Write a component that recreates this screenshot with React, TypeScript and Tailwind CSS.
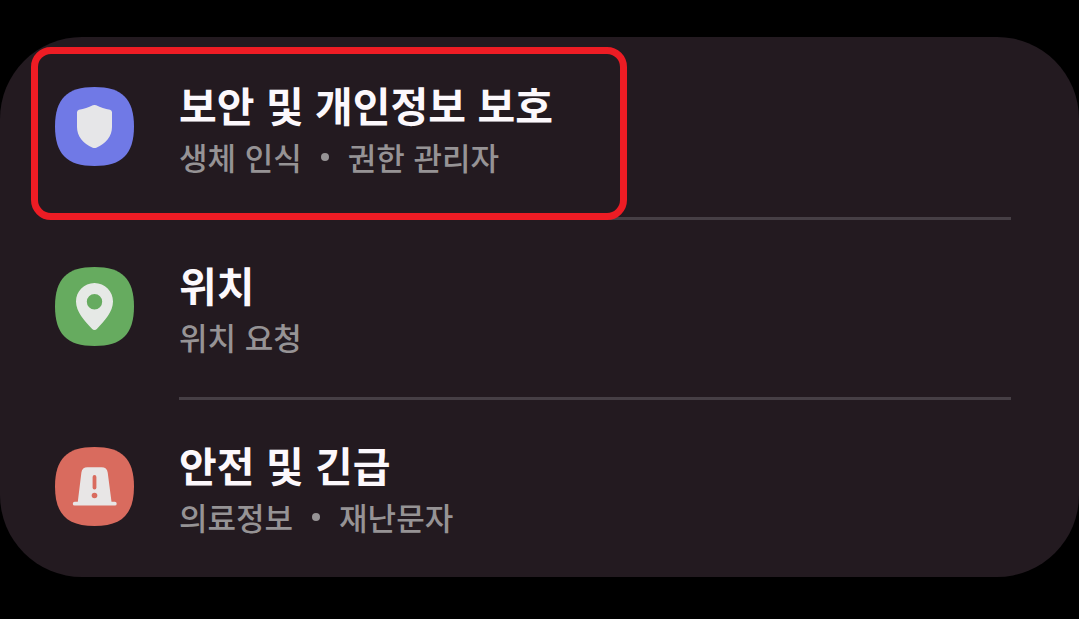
import type { ReactNode } from "react";

type Item = {
  title: string;
  details: string[];
  color: string;
  icon: ReactNode;
};

const items: Item[] = [
  {
    title: "보안 및 개인정보 보호",
    details: ["생체 인식", "권한 관리자"],
    color: "text-[#7079e6]",
    icon: (
      <path
        fill="#e6e6e8"
        d="M37.800 18.300Q39.500 17.700 41.200 18.300C45.500 20.500 50 22 55 22.700Q57 23.200 57 25.300V40C57 49 51 56.500 41.300 60.700Q39.500 61.500 37.700 60.700C28 56.500 22 49 22 40V25.300Q22 23.200 24 22.700C29 22 33.500 20.500 37.800 18.300Z"
      />
    ),
  },
  {
    title: "위치",
    details: ["위치 요청"],
    color: "text-[#66ab5f]",
    icon: (
      <path
        fill="#e6e9e6"
        fillRule="evenodd"
        d="M39.500 16C29 16 21 24.300 21 34.500C21 45 29.500 53.500 36.700 61.500Q39.500 64.500 42.300 61.500C49.500 53.500 58 45 58 34.500C58 24.300 50 16 39.500 16ZM39.500 27A7.700 7.700 0 1 1 39.500 42.400A7.700 7.700 0 1 1 39.500 27Z"
      />
    ),
  },
  {
    title: "안전 및 긴급",
    details: ["의료정보", "재난문자"],
    color: "text-[#d96b5e]",
    icon: (
      <>
        <path
          fill="#e8e6e6"
          d="M32.500 20.200H46.500Q52 20.200 52.700 25.500L56.500 54.800H59.800A1.900 1.900 0 0 1 59.800 58.600H19.700A1.900 1.900 0 0 1 19.700 54.800H22.800L26.400 25.500Q27.100 20.200 32.500 20.200Z"
        />
        <path stroke="currentColor" strokeWidth="3.800" strokeLinecap="round" d="M39.500 30V40.500" />
        <circle cx="39.500" cy="48.500" r="2.800" fill="currentColor" />
      </>
    ),
  },
];

function SettingsRow({ item, first, marked }: { item: Item; first: boolean; marked: boolean }) {
  return (
    <li className="relative">
      <a href="#" className="flex pl-[55px] pr-[68px]">
        <svg
          viewBox="0 0 79 79"
          fill="none"
          aria-hidden="true"
          className={`mt-[50px] size-[79px] shrink-0 ${item.color}`}
        >
          <path
            fill="currentColor"
            d="M39.500 0C67 0 79 12 79 39.500C79 67 67 79 39.500 79C12 79 0 67 0 39.500C0 12 12 0 39.500 0Z"
          />
          {item.icon}
        </svg>
        <div className="ml-[45px] flex-1 pb-[38px]">
          <div className={`h-[3px] ${first ? "" : "bg-[#463f45]"}`} />
          <h2 className="pt-[38px] text-[41px] font-bold leading-[52px] text-[#fcf8fc]">{item.title}</h2>
          <p className="mt-1 flex items-center gap-[19px] text-[31px] font-medium leading-[45px] text-[#969395]">
            {item.details.map((detail, i) => (
              <span key={detail} className="flex items-center gap-[19px]">
                {i > 0 && <span className="size-2 rounded-full bg-[#969395]" />}
                {detail}
              </span>
            ))}
          </p>
        </div>
      </a>
      {marked && (
        <div className="pointer-events-none absolute left-[31px] top-[10px] z-10 h-[173px] w-[596px] rounded-[20px] border-[7px] border-[#ed1c24]" />
      )}
    </li>
  );
}

export default function App() {
  return (
    <main
      lang="ko"
      className="min-h-screen bg-black py-[37px] font-['Noto_Sans_CJK_KR',sans-serif]"
    >
      <ul className="rounded-[82px] bg-[#231a20]">
        {items.map((item, i) => (
          <SettingsRow key={item.title} item={item} first={i === 0} marked={i === 0} />
        ))}
      </ul>
    </main>
  );
}
